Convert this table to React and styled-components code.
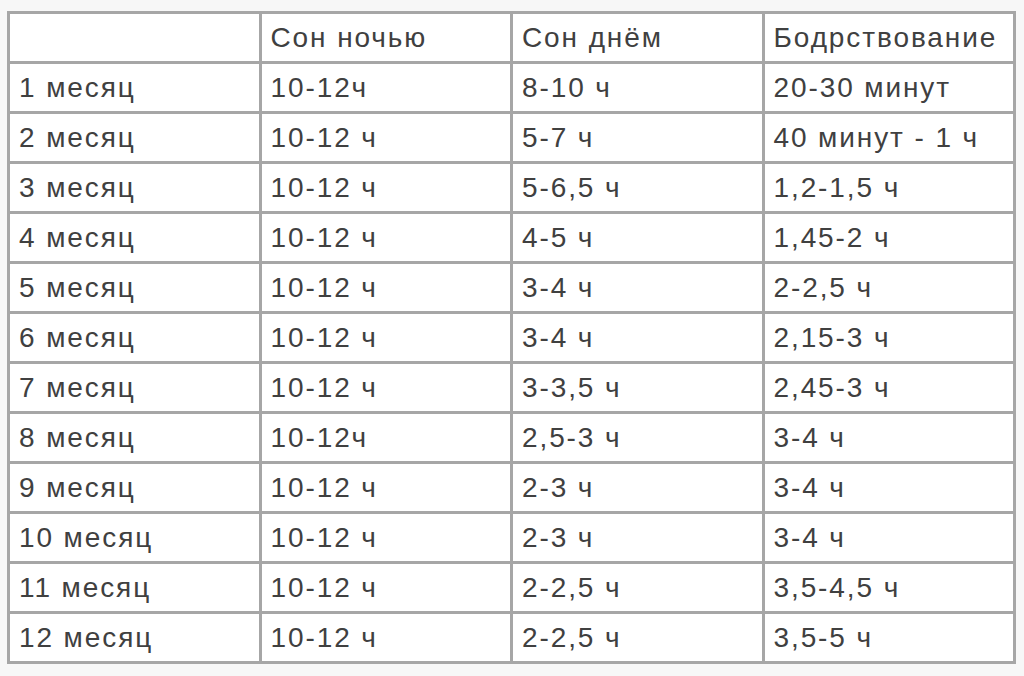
import React from 'react';
import styled, { createGlobalStyle } from 'styled-components';

const GlobalStyle = createGlobalStyle`
  html, body {
    margin: 0;
    padding: 0;
    background: #f7f7f7;
  }
`;

const rows = [
  ['1 месяц', '10-12ч', '8-10 ч', '20-30 минут'],
  ['2 месяц', '10-12 ч', '5-7 ч', '40 минут - 1 ч'],
  ['3 месяц', '10-12 ч', '5-6,5 ч', '1,2-1,5 ч'],
  ['4 месяц', '10-12 ч', '4-5 ч', '1,45-2 ч'],
  ['5 месяц', '10-12 ч', '3-4 ч', '2-2,5 ч'],
  ['6 месяц', '10-12 ч', '3-4 ч', '2,15-3 ч'],
  ['7 месяц', '10-12 ч', '3-3,5 ч', '2,45-3 ч'],
  ['8 месяц', '10-12ч', '2,5-3 ч', '3-4 ч'],
  ['9 месяц', '10-12 ч', '2-3 ч', '3-4 ч'],
  ['10 месяц', '10-12 ч', '2-3 ч', '3-4 ч'],
  ['11 месяц', '10-12 ч', '2-2,5 ч', '3,5-4,5 ч'],
  ['12 месяц', '10-12 ч', '2-2,5 ч', '3,5-5 ч'],
];

const headers = ['', 'Сон ночью', 'Сон днём', 'Бодрствование'];

const App = () => {
  return (
    <Page>
      <GlobalStyle />
      <SleepTable>
        <colgroup>
          <Col />
          <Col />
          <Col />
          <Col />
        </colgroup>
        <thead>
          <tr>
            {headers.map((h, i) => (
              <Cell as="th" key={i}>{h}</Cell>
            ))}
          </tr>
        </thead>
        <tbody>
          {rows.map((r) => (
            <tr key={r[0]}>
              {r.map((c, i) => (
                <Cell key={i}>{c}</Cell>
              ))}
            </tr>
          ))}
        </tbody>
      </SleepTable>
    </Page>
  );
};

export default App;

const Page = styled.div`
  padding: 11px 0 0 7px;
  width: 1024px;
  height: 676px;
  box-sizing: border-box;
`;

const SleepTable = styled.table`
  border-collapse: collapse;
  table-layout: fixed;
  width: 1009px;
  background: #ffffff;
  border: 3px solid #a6a6a6;
`;

const Col = styled.col`
  width: 25%;
`;

const Cell = styled.td`
  height: 47px;
  padding: 0 2px 0 9px;
  border: 3px solid #a6a6a6;
  font-family: 'Liberation Sans', Arial, sans-serif;
  font-size: 28px;
  line-height: 32px;
  font-weight: 400;
  letter-spacing: 1.9px;
  color: #404040;
  text-align: left;
  vertical-align: middle;
  white-space: nowrap;
  overflow: hidden;
`;
